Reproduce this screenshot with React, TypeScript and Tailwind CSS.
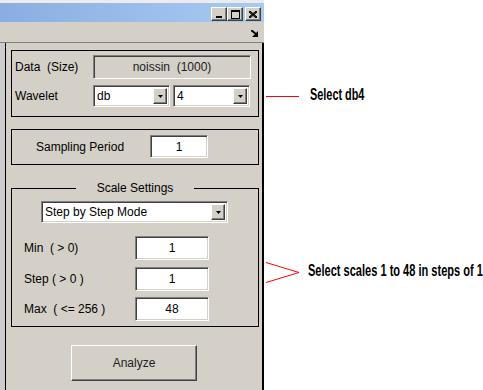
import React from "react";

const FONT = { fontFamily: '"Liberation Sans", Arial, sans-serif' };

const sunken =
  "border border-t-[#808080] border-l-[#808080] border-b-white border-r-white shadow-[inset_1px_1px_0_#404040,inset_-1px_-1px_0_#d4d0c8]";
const raised =
  "border border-t-white border-l-white border-b-[#404040] border-r-[#404040] shadow-[inset_-1px_-1px_0_#808080]";

function Arrow() {
  return (
    <div className={`w-[14px] h-full bg-[#d4d0c8] flex items-center justify-center ${raised}`}>
      <svg width="5" height="3" viewBox="0 0 5 3">
        <path d="M0 0H5L2.5 3Z" fill="#000" />
      </svg>
    </div>
  );
}

function Popup({ text, className }: { text: string; className: string }) {
  return (
    <div className={`bg-white flex items-stretch p-[2px] ${sunken} ${className}`}>
      <div className="flex-1 flex items-center pl-[1px] text-[12px] text-black leading-none">{text}</div>
      <Arrow />
    </div>
  );
}

function Edit({ text, className }: { text: string; className: string }) {
  return (
    <div className={`bg-white flex items-center justify-center text-[12px] text-black leading-none ${sunken} ${className}`}>
      {text}
    </div>
  );
}

function CaptionBtn({ children }: { children: React.ReactNode }) {
  return (
    <div className={`w-[16px] h-[14px] bg-[#d4d0c8] flex items-center justify-center ${raised}`}>{children}</div>
  );
}

export default function App() {
  return (
    <div className="relative w-[483px] h-[390px] bg-white overflow-hidden" style={FONT}>
      <div className="w-[264px] h-[390px] flex flex-col">
        <div className="h-[3px] bg-[#ececec]" />
        <div className="h-[19px] bg-gradient-to-r from-[#8aaee2] to-[#a8cbf1] flex items-start justify-end pt-[4px] pr-[3px]">
          <CaptionBtn>
            <svg width="8" height="8" viewBox="0 0 8 8">
              <rect x="1" y="6" width="6" height="2" fill="#000" />
            </svg>
          </CaptionBtn>
          <CaptionBtn>
            <svg width="9" height="9" viewBox="0 0 9 9">
              <path d="M0 0H9V9H0Z M1 2V8H8V2Z" fill="#000" fillRule="evenodd" />
            </svg>
          </CaptionBtn>
          <div className="w-[2px]" />
          <CaptionBtn>
            <svg width="8" height="7" viewBox="0 0 8 7">
              <path d="M0 0L8 7M1 0L8 6M0 1L7 7M8 0L0 7M7 0L0 6M8 1L1 7" stroke="#000" strokeWidth="1" />
            </svg>
          </CaptionBtn>
        </div>
        <div className="h-[20px] bg-[#d4d0c8] flex items-center justify-end pr-[5px]">
          <svg width="8" height="7" viewBox="0 0 8 7" className="mt-[2px]">
            <path d="M0 0L5 4" stroke="#000" strokeWidth="2" />
            <path d="M7 1V7H1Z" fill="#000" />
          </svg>
        </div>
        <div className="h-[1px] bg-[#808080]" />
        <div className="flex-1 flex">
          <div className="w-[5px] bg-[#cccccc]" />
          <div className="w-[1px] bg-black" />
          <div className="w-[256px] bg-[#d4d0c8] flex flex-col">
            {/* Panel 1 */}
            <div className="ml-[5px] mt-[7px] w-[248px] border border-black pt-[4px] pb-[9px] pl-[3px] flex flex-col gap-[6px]">
              <div className="flex items-center">
                <div className="w-[78px] text-[12px] text-black whitespace-pre leading-none">Data  (Size)</div>
                <div className="w-[158px] h-[24px] bg-[#d4d0c8] flex items-center justify-center text-[12px] text-[#202020] leading-none border border-t-[#808080] border-l-[#808080] border-b-white border-r-white shadow-[inset_1px_1px_0_#404040,inset_-1px_-1px_0_#d4d0c8] whitespace-pre">
                  noissin  (1000)
                </div>
              </div>
              <div className="flex items-center">
                <div className="w-[78px] text-[12px] text-black leading-none">Wavelet</div>
                <Popup text="db" className="w-[77px] h-[22px]" />
                <div className="w-[3px]" />
                <Popup text="4" className="w-[77px] h-[22px]" />
              </div>
            </div>
            {/* Panel 2 */}
            <div className="ml-[5px] mt-[12px] w-[248px] border border-black pt-[5px] pb-[6px] flex items-center">
              <div className="w-[138px] pl-[24px] text-[12px] text-black leading-none">Sampling Period</div>
              <Edit text="1" className="w-[58px] h-[23px]" />
            </div>
            {/* Panel 3 */}
            <fieldset className="ml-[5px] mt-[16px] w-[248px] border border-black p-0 m-0">
              <legend className="mx-auto px-[21px] text-[12px] text-black leading-[14px]">Scale Settings</legend>
              <div className="flex flex-col pt-[6px] pb-[5px]">
                <div className="flex justify-center pr-[1px]">
                  <Popup text="Step by Step Mode" className="w-[187px] h-[22px]" />
                </div>
                <div className="flex items-center mt-[13px] pl-[12px]">
                  <div className="w-[111px] text-[12px] text-black whitespace-pre leading-none">Min  ( &gt; 0)</div>
                  <Edit text="1" className="w-[74px] h-[24px]" />
                </div>
                <div className="flex items-center mt-[7px] pl-[12px]">
                  <div className="w-[111px] text-[12px] text-black whitespace-pre leading-none">Step ( &gt; 0 )</div>
                  <Edit text="1" className="w-[74px] h-[24px]" />
                </div>
                <div className="flex items-center mt-[6px] pl-[12px]">
                  <div className="w-[111px] text-[12px] text-black whitespace-pre leading-none">Max  ( &lt;= 256 )</div>
                  <Edit text="48" className="w-[74px] h-[24px]" />
                </div>
              </div>
            </fieldset>
            <div className="flex justify-center mt-[18px]">
              <div className={`w-[126px] h-[36px] bg-[#d4d0c8] flex items-center justify-center text-[12px] text-[#202020] leading-none ${raised}`}>
                Analyze
              </div>
            </div>
          </div>
          <div className="w-[2px] bg-black" />
        </div>
      </div>

      {/* annotations */}
      <svg className="absolute left-0 top-0" width="483" height="390" viewBox="0 0 483 390">
        <path d="M266 96.5H299" stroke="#ff0000" strokeWidth="1" />
        <path d="M266 262.5L299 272.5L266 282.5" stroke="#ff0000" strokeWidth="1" fill="none" />
      </svg>
      <div className="absolute left-[310px] top-[86px] text-[16px] font-bold text-black leading-[18px] whitespace-nowrap origin-left scale-x-[0.68]">
        Select db4
      </div>
      <div className="absolute left-[308px] top-[262px] text-[16px] font-bold text-black leading-[18px] whitespace-nowrap origin-left scale-x-[0.69]">
        Select scales 1 to 48 in steps of 1
      </div>
    </div>
  );
}
